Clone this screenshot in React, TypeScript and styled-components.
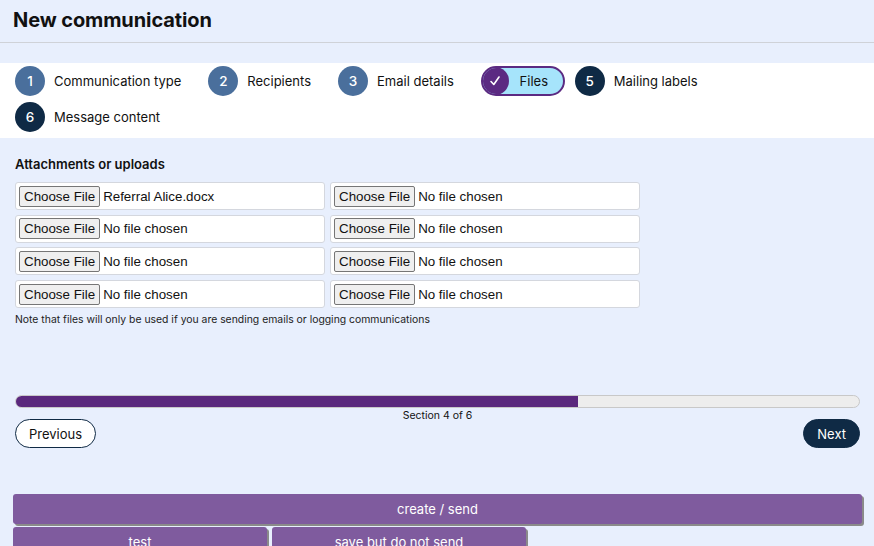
import React from "react";
import styled, { createGlobalStyle } from "styled-components";

const Global = createGlobalStyle`
  html, body { margin: 0; padding: 0; background: #e8effd; }
  body { font-family: Inter, "Noto Sans", sans-serif; color: #111; }
  * { box-sizing: border-box; }
`;

const Page = styled.div`
  width: 874px;
  height: 546px;
  overflow: hidden;
  background: #e8effd;
`;

const Header = styled.header`
  height: 43px;
  border-bottom: 1px solid #cfd2d8;
  padding: 8px 13px 0;
`;

const Title = styled.h1`
  margin: 0;
  font-size: 20px;
  font-weight: 700;
  letter-spacing: -0.1px;
  line-height: 24px;
`;

const Stepper = styled.nav`
  margin-top: 20px;
  background: #fff;
  padding: 3px 15px 6px;
  display: flex;
  flex-wrap: wrap;
  row-gap: 6px;
  column-gap: 27px;
  width: 874px;
  height: 75px;
`;

const Step = styled.div<{ $tight?: boolean; $full?: boolean }>`
  display: flex;
  align-items: center;
  gap: 9px;
  height: 30px;
  font-size: 13px;
  color: #111;
  margin-left: ${(p) => (p.$tight ? "-17px" : "0")};
  width: ${(p) => (p.$full ? "100%" : "auto")};
`;

const Circle = styled.span<{ $dark?: boolean }>`
  width: 30px;
  height: 30px;
  border-radius: 50%;
  background: ${(p) => (p.$dark ? "#0f2a45" : "#4a6f9c")};
  color: #fff;
  display: flex;
  align-items: center;
  justify-content: center;
  font-size: 13.5px;
  font-weight: 500;
`;

const ActivePill = styled.div`
  display: flex;
  align-items: center;
  height: 30px;
  width: 84px;
  border: 2px solid #5b2a82;
  border-radius: 15px;
  background: #a6e4fb;
  overflow: hidden;
  font-size: 13px;
`;

const CheckCircle = styled.span`
  width: 28px;
  height: 28px;
  margin-left: -2px;
  border-radius: 50%;
  background: #5b2a82;
  display: flex;
  align-items: center;
  justify-content: center;
`;

const PillLabel = styled.span`
  flex: 1;
  text-align: center;
  padding-right: 4px;
`;

const Content = styled.main`
  padding: 18px 14px 0 15px;
`;

const SectionLabel = styled.div`
  font-size: 13px;
  font-weight: 600;
  margin-bottom: 10px;
  line-height: 16px;
`;

const FileGrid = styled.div`
  display: grid;
  grid-template-columns: 310px 310px;
  column-gap: 5px;
  row-gap: 4.7px;
`;

const FileBox = styled.div`
  height: 28px;
  background: #fff;
  border: 1px solid #d4d7de;
  border-radius: 3px;
  display: flex;
  align-items: center;
  padding-left: 3px;
  font-family: "Liberation Sans", Arial, sans-serif;
  font-size: 13.333px;
  gap: 3px;
`;

const ChooseButton = styled.span`
  display: inline-flex;
  align-items: center;
  height: 21px;
  padding: 0 4px;
  background: #efefef;
  border: 1px solid #767676;
  border-radius: 2px;
  color: #111;
`;

const FileName = styled.span`
  color: #111;
`;

const Note = styled.p`
  margin: 5px 0 0;
  font-size: 10.4px;
  color: #222;
`;

const Progress = styled.div`
  margin-top: 69px;
  height: 13px;
  border: 1px solid #c8c8c8;
  border-radius: 7px;
  background: #ededed;
  overflow: hidden;
`;

const ProgressFill = styled.div`
  height: 100%;
  background: #5a287d;
`;

const SectionText = styled.div`
  text-align: center;
  font-size: 10.5px;
  line-height: 14px;
  margin-top: 1px;
`;

const NavRow = styled.div`
  display: flex;
  justify-content: space-between;
  margin-top: -4px;
`;

const NavButton = styled.button<{ $primary?: boolean }>`
  height: 29px;
  padding: 0 13px;
  border-radius: 15px;
  border: 1px solid #0f2a45;
  background: ${(p) => (p.$primary ? "#0f2a45" : "#fff")};
  color: ${(p) => (p.$primary ? "#fff" : "#111")};
  font-family: Inter, "Noto Sans", sans-serif;
  font-size: 13px;
`;

const Actions = styled.div`
  padding: 46px 12px 0 13px;
  display: flex;
  flex-direction: column;
  gap: 3px;
`;

const ActionRow = styled.div`
  display: flex;
  gap: 5px;
`;

const ActionButton = styled.button<{ $width?: string }>`
  width: ${(p) => p.$width || "100%"};
  height: 30px;
  border: none;
  border-radius: 3px;
  background: #7f5b9e;
  color: #fff;
  font-family: Inter, "Noto Sans", sans-serif;
  font-size: 13px;
  box-shadow: 2px 2px 0 #8a8a8a;
`;

const steps = [
  { n: 1, label: "Communication type" },
  { n: 2, label: "Recipients" },
  { n: 3, label: "Email details" },
];

const files = [
  "Referral Alice.docx",
  "No file chosen",
  "No file chosen",
  "No file chosen",
  "No file chosen",
  "No file chosen",
  "No file chosen",
  "No file chosen",
];
const order = [0, 4, 1, 5, 2, 6, 3, 7];

export default function App() {
  return (
    <Page>
      <Global />
      <Header>
        <Title>New communication</Title>
      </Header>
      <Stepper>
        {steps.map((s) => (
          <Step key={s.n}>
            <Circle>{s.n}</Circle>
            <span>{s.label}</span>
          </Step>
        ))}
        <ActivePill>
          <CheckCircle>
            <svg width="12" height="12" viewBox="0 0 12 12" fill="none">
              <path d="M2 6.5 L4.8 9.5 L10 2" stroke="#fff" strokeWidth="1.6" strokeLinecap="round" strokeLinejoin="round" />
            </svg>
          </CheckCircle>
          <PillLabel>Files</PillLabel>
        </ActivePill>
        <Step $tight>
          <Circle $dark>5</Circle>
          <span>Mailing labels</span>
        </Step>
        <Step $full>
          <Circle $dark>6</Circle>
          <span>Message content</span>
        </Step>
      </Stepper>
      <Content>
        <SectionLabel>Attachments or uploads</SectionLabel>
        <FileGrid>
          {order.map((i) => (
            <FileBox key={i}>
              <ChooseButton>Choose File</ChooseButton>
              <FileName>{files[i]}</FileName>
            </FileBox>
          ))}
        </FileGrid>
        <Note>Note that files will only be used if you are sending emails or logging communications</Note>
        <Progress>
          <ProgressFill style={{ width: `${(4 / 6) * 100}%` }} />
        </Progress>
        <SectionText>Section 4 of 6</SectionText>
        <NavRow>
          <NavButton>Previous</NavButton>
          <NavButton $primary>Next</NavButton>
        </NavRow>
      </Content>
      <Actions>
        <ActionButton>create / send</ActionButton>
        <ActionRow>
          <ActionButton $width="254px">test</ActionButton>
          <ActionButton $width="254px">save but do not send</ActionButton>
        </ActionRow>
      </Actions>
    </Page>
  );
}
